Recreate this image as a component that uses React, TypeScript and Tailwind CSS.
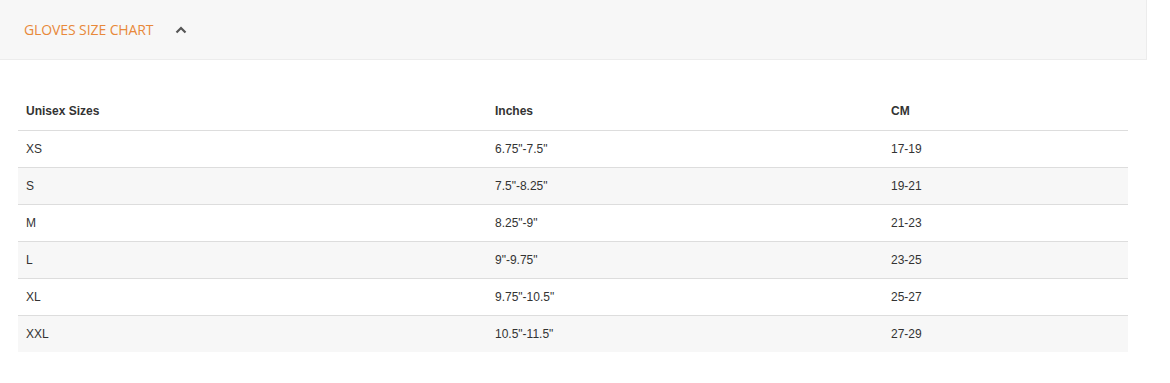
import React from "react";

const rows = [
  ["XS", '6.75"-7.5"', "17-19"],
  ["S", '7.5"-8.25"', "19-21"],
  ["M", '8.25"-9"', "21-23"],
  ["L", '9"-9.75"', "23-25"],
  ["XL", '9.75"-10.5"', "25-27"],
  ["XXL", '10.5"-11.5"', "27-29"],
];

export default function App() {
  return (
    <div className="w-[1170px] h-[383px] bg-white">
      <div className="w-[1147px] h-[60px] bg-[#f7f7f7] border-b border-r border-[#ececec] flex items-center pl-6">
        <span
          className="text-[14px] text-[#e8893a] tracking-[-0.1px]"
          style={{ fontFamily: '"Open Sans", sans-serif' }}
        >
          GLOVES SIZE CHART
        </span>
        <svg className="ml-[22px]" width="12" height="8" viewBox="0 0 12 8">
          <path d="M1.5 6.5 L6 2 L10.5 6.5" fill="none" stroke="#555" strokeWidth="2.2" />
        </svg>
      </div>
      <div
        className="ml-[18px] mt-[32px] w-[1110px] text-[12px] text-[#333]"
        style={{ fontFamily: '"Liberation Sans", Arial, sans-serif' }}
      >
        <div className="grid grid-cols-[469px_396px_245px] h-[38px] items-center font-bold">
          <div className="pl-2">Unisex Sizes</div>
          <div className="pl-2">Inches</div>
          <div className="pl-2">CM</div>
        </div>
        {rows.map((r, i) => (
          <div
            key={r[0]}
            className={
              "grid grid-cols-[469px_396px_245px] h-[37px] items-center border-t border-[#dddddd] " +
              (i % 2 === 1 ? "bg-[#f7f7f7]" : "bg-white")
            }
          >
            <div className="pl-2">{r[0]}</div>
            <div className="pl-2">{r[1]}</div>
            <div className="pl-2">{r[2]}</div>
          </div>
        ))}
      </div>
    </div>
  );
}
